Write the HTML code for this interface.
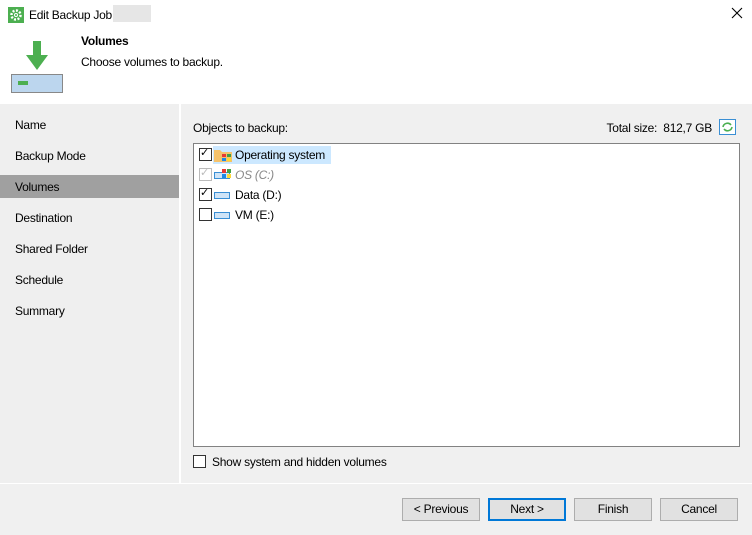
<!DOCTYPE html>
<html><head><style>
*{margin:0;padding:0;box-sizing:border-box}
body{width:752px;height:535px;background:#f0f0f0;font-family:"Liberation Sans",sans-serif;font-size:12px;letter-spacing:-0.25px;color:#000;position:relative;overflow:hidden}
.a{position:absolute}
.nav{left:15px;font-size:12px}
.btn{position:absolute;top:498px;width:78px;height:23px;background:#e1e1e1;border:1px solid #adadad;text-align:center;line-height:21px;font-size:12px}
.cb{position:absolute;width:13px;height:13px;border:1px solid #333;background:#fff}
.dr{position:absolute;width:16px;height:7px;border:1px solid #3a8fd4;background:#cfe4f7}
</style></head><body>
<div class="a" style="left:0;top:0;width:752px;height:104px;background:#fff"></div>
<svg class="a" style="left:8px;top:7px" width="16" height="16"><rect width="16" height="16" fill="#4caf50"/><circle cx="8" cy="8" r="4.5" fill="none" stroke="#fff" stroke-width="2.5" stroke-dasharray="2 1.5"/><circle cx="8" cy="8" r="2" fill="#fff"/><circle cx="8" cy="8" r="1" fill="#4caf50"/></svg>
<div class="a" style="left:29px;top:8px;font-size:12px">Edit Backup Job</div>
<div class="a" style="left:113px;top:5px;width:38px;height:17px;background:#e6e6e6"></div>
<svg class="a" style="left:731px;top:7px" width="12" height="12"><path d="M1 1L11 11M11 1L1 11" stroke="#000" stroke-width="1.1"/></svg>
<svg class="a" style="left:22px;top:40px" width="30" height="32"><path d="M11 1h8v14h7L15 30 4 15h7z" fill="#4caf50"/></svg>
<div class="a" style="left:11px;top:74px;width:52px;height:19px;background:#bcd6ee;border:1px solid #888"></div>
<div class="a" style="left:18px;top:81px;width:10px;height:4px;background:#4caf50"></div>
<div class="a" style="left:81px;top:34px;font-weight:bold">Volumes</div>
<div class="a" style="left:81px;top:55px">Choose volumes to backup.</div>
<div class="a" style="left:0;top:104px;width:179px;height:379px;background:#efefef"></div>
<div class="a" style="left:179px;top:104px;width:2px;height:379px;background:#fff"></div>
<div class="a" style="left:0;top:175px;width:179px;height:23px;background:#a0a0a0"></div>
<div class="a nav" style="top:118px">Name</div>
<div class="a nav" style="top:149px">Backup Mode</div>
<div class="a nav" style="top:180px">Volumes</div>
<div class="a nav" style="top:211px">Destination</div>
<div class="a nav" style="top:242px">Shared Folder</div>
<div class="a nav" style="top:273px">Schedule</div>
<div class="a nav" style="top:304px">Summary</div>
<div class="a" style="left:193px;top:121px">Objects to backup:</div>
<div class="a" style="right:40px;top:121px">Total size:&nbsp; 812,7 GB</div>
<svg class="a" style="left:719px;top:119px" width="17" height="16"><rect x=".5" y=".5" width="16" height="15" fill="#fff" stroke="#3a8fd4"/><path d="M4 8a4.5 4.5 0 0 1 8-2M13 8a4.5 4.5 0 0 1-8 2" fill="none" stroke="#4caf50" stroke-width="1.6"/></svg>
<div class="a" style="left:193px;top:143px;width:547px;height:304px;background:#fff;border:1px solid #828282"></div>
<div class="a" style="left:213px;top:146px;width:118px;height:18px;background:#cce8ff"></div>
<div class="cb" style="left:199px;top:148px"></div><div class="a" style="left:200px;top:146px;font-size:11px">✓</div>
<svg class="a" style="left:213px;top:147px" width="20" height="16"><path d="M1 3h6l2 2h10v10H1z" fill="#f5c26b"/><rect x="9" y="7" width="4" height="3" fill="#e53935"/><rect x="14" y="7" width="4" height="3" fill="#43a047"/><rect x="9" y="11" width="4" height="3" fill="#1e88e5"/><rect x="14" y="11" width="4" height="3" fill="#fdd835"/></svg>
<div class="a" style="left:235px;top:148px">Operating system</div>
<div class="cb" style="left:199px;top:168px;border-color:#bbb"></div><div class="a" style="left:200px;top:166px;font-size:11px;color:#bbb">✓</div>
<div class="dr" style="left:214px;top:172px"></div>
<svg class="a" style="left:222px;top:169px" width="10" height="10"><rect x="0" y="0" width="4" height="4" fill="#e53935"/><rect x="5" y="0" width="4" height="4" fill="#43a047"/><rect x="0" y="5" width="4" height="4" fill="#1e88e5"/><rect x="5" y="5" width="4" height="4" fill="#fdd835"/></svg>
<div class="a" style="left:235px;top:168px;color:#888;font-style:italic">OS (C:)</div>
<div class="cb" style="left:199px;top:188px"></div><div class="a" style="left:200px;top:186px;font-size:11px">✓</div>
<div class="dr" style="left:214px;top:192px"></div>
<div class="a" style="left:235px;top:188px">Data (D:)</div>
<div class="cb" style="left:199px;top:208px"></div>
<div class="dr" style="left:214px;top:212px"></div>
<div class="a" style="left:235px;top:208px">VM (E:)</div>
<div class="cb" style="left:193px;top:455px"></div>
<div class="a" style="left:212px;top:455px">Show system and hidden volumes</div>
<div class="a" style="left:0;top:483px;width:752px;height:1px;background:#fff"></div>
<div class="btn" style="left:402px">&lt; Previous</div>
<div class="btn" style="left:488px;border:2px solid #0078d7;line-height:19px">Next &gt;</div>
<div class="btn" style="left:574px">Finish</div>
<div class="btn" style="left:660px">Cancel</div>
</body></html>
